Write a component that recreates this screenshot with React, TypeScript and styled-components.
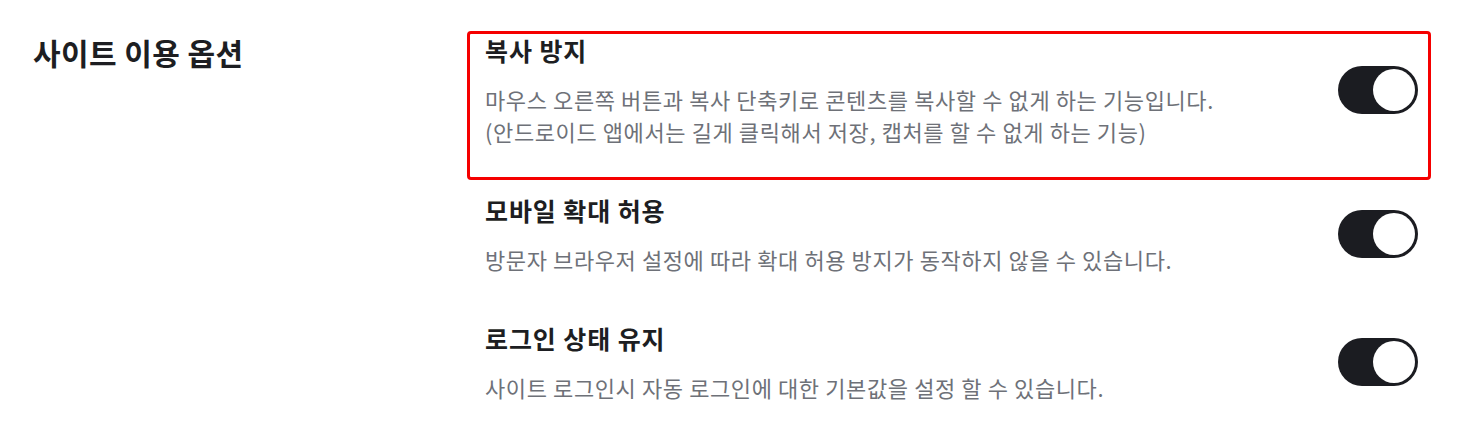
import React, { useState } from 'react';
import styled, { createGlobalStyle } from 'styled-components';

const GlobalStyle = createGlobalStyle`
  html, body {
    margin: 0;
    padding: 0;
    background: #ffffff;
  }
  body {
    font-family: "Noto Sans CJK KR", "Noto Sans", sans-serif;
    color: #1d1e22;
  }
`;

const Section = styled.section`
  display: grid;
  grid-template-columns: 435px 962px;
  padding: 32px 0 0 33px;
`;

const Heading = styled.h2`
  margin: 0;
  font-size: 30px;
  line-height: 40px;
  font-weight: 700;
  color: #1d1e22;
  letter-spacing: 0.4px;
`;

const List = styled.div`
  display: flex;
  flex-direction: column;
  gap: 13px;
`;

const Item = styled.div<{ $highlight?: boolean }>`
  display: flex;
  align-items: center;
  justify-content: space-between;
  padding: 0 12px 32px 17px;
  border-radius: 3px;
  outline: ${(p) => (p.$highlight ? '3px solid #f50000' : 'none')};
  outline-offset: -2px;
`;

const Text = styled.div`
  display: flex;
  flex-direction: column;
  gap: 15px;
`;

const Title = styled.div`
  font-size: 25px;
  line-height: 36px;
  font-weight: 700;
  color: #1d1e22;
  letter-spacing: 0.9px;
`;

const Desc = styled.div`
  font-size: 22px;
  line-height: 32px;
  font-weight: 400;
  color: #6e7178;
  letter-spacing: 0.6px;
`;

const Switch = styled.button<{ $on: boolean }>`
  flex: none;
  position: relative;
  width: 80px;
  height: 48px;
  border: none;
  padding: 0;
  border-radius: 24px;
  background: ${(p) => (p.$on ? '#1b1c21' : '#d4d6da')};
  cursor: pointer;

  &::after {
    content: '';
    position: absolute;
    top: 3px;
    left: ${(p) => (p.$on ? '35px' : '3px')};
    width: 42px;
    height: 42px;
    border-radius: 50%;
    background: #ffffff;
  }
`;

interface OptionProps {
  title: string;
  lines: string[];
  highlight?: boolean;
}

const Option = ({ title, lines, highlight }: OptionProps) => {
  const [on, setOn] = useState(true);
  return (
    <Item $highlight={highlight}>
      <Text>
        <Title>{title}</Title>
        <Desc>
          {lines.map((line, i) => (
            <div key={i}>{line}</div>
          ))}
        </Desc>
      </Text>
      <Switch $on={on} onClick={() => setOn(!on)} aria-label={title} />
    </Item>
  );
};

const App = () => {
  return (
    <>
      <GlobalStyle />
      <Section>
        <Heading>사이트 이용 옵션</Heading>
        <List>
          <Option
            highlight
            title={'복사 방지'}
            lines={[
              '마우스 오른쪽 버튼과 복사 단축키로 콘텐츠를 복사할 수 없게 하는 기능입니다.',
              '(안드로이드 앱에서는 길게 클릭해서 저장, 캡처를 할 수 없게 하는 기능)',
            ]}
          />
          <Option
            title={'모바일 확대 허용'}
            lines={['방문자 브라우저 설정에 따라 확대 허용 방지가 동작하지 않을 수 있습니다.']}
          />
          <Option
            title={'로그인 상태 유지'}
            lines={['사이트 로그인시 자동 로그인에 대한 기본값을 설정 할 수 있습니다.']}
          />
        </List>
      </Section>
    </>
  );
};

export default App;
